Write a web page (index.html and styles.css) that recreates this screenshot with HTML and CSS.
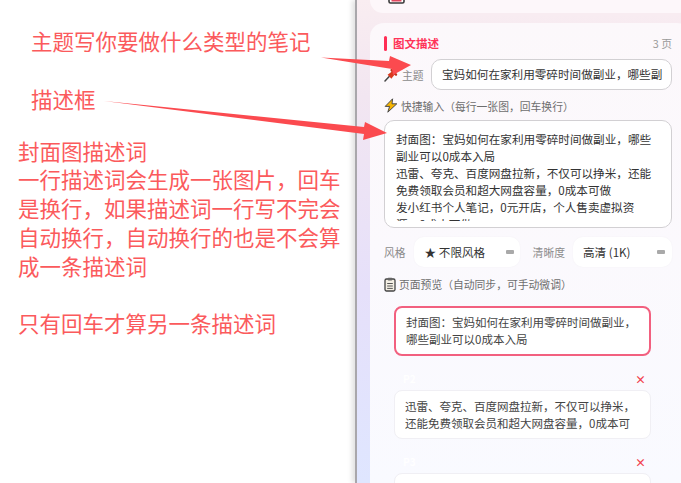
FILE: index.html
```html
<!DOCTYPE html>
<html lang="zh-CN">
<head>
<meta charset="utf-8">
<title>图文描述</title>
<link rel="stylesheet" href="styles.css">
</head>
<body>
<div class="page">
  <section class="notes">
    <p class="note note-topic">主题写你要做什么类型的笔记</p>
    <p class="note note-box">描述框</p>
    <div class="note-body">
      <p>封面图描述词</p>
      <p>一行描述词会生成一张图片，回车</p>
      <p>是换行，如果描述词一行写不完会</p>
      <p>自动换行，自动换行的也是不会算</p>
      <p>成一条描述词</p>
      <p>&nbsp;</p>
      <p>只有回车才算另一条描述词</p>
    </div>
  </section>
  <main class="panel">
    <div class="card card-top">
      <svg class="top-icon" width="17" height="14" viewBox="0 0 17 14"><rect x="1" y="1" width="15" height="12" rx="1.5" fill="#fff" stroke="#3a3a3a" stroke-width="1.6"/><rect x="3.5" y="7" width="10" height="4.5" fill="#e2475f"/></svg>
    </div>
    <div class="card card-main">
      <header class="card-head">
        <span class="bar"></span>
        <h2 class="title">图文描述</h2>
        <span class="count">3 页</span>
      </header>
      <div class="topic-row">
        <svg class="icon" width="14" height="14" viewBox="0 0 14 14"><path d="M1 13 5.2 8.6" stroke="#444" stroke-width="1.5" stroke-linecap="round"/><path d="M3.6 6.8 8 3.4l2.8 2.8-3.4 4.6z" fill="#d9381e"/><path d="M7.6 2.2l4.4 4.4" stroke="#c5301c" stroke-width="2.4" stroke-linecap="round"/></svg>
        <span class="label">主题</span>
        <div class="field topic-field"><span class="topic-text">宝妈如何在家利用零碎时间做副业，哪些副业可以0成本入局</span></div>
      </div>
      <div class="sub-head sub-quick">
        <svg class="icon" width="14" height="15" viewBox="0 0 14 15"><path d="M8.6.8 1.2 8.4h4.4L3.8 14.2 12.8 5.8H8z" fill="#f7b500" stroke="#4a4a4a" stroke-width="1"/></svg>
        <span>快捷输入（每行一张图，回车换行）</span>
      </div>
      <div class="field textarea">
        <div class="textarea-inner">
          <p>封面图：宝妈如何在家利用零碎时间做副业，哪些副业可以0成本入局</p>
          <p>迅雷、夸克、百度网盘拉新，不仅可以挣米，还能免费领取会员和超大网盘容量，0成本可做</p>
          <p>发小红书个人笔记，0元开店，个人售卖虚拟资源，0成本可做</p>
        </div>
      </div>
      <div class="options">
        <span class="label">风格</span>
        <div class="select select-style"><span>★ 不限风格</span><i class="caret"></i></div>
        <span class="label">清晰度</span>
        <div class="select select-quality"><span>高清 (1K)</span><i class="caret"></i></div>
      </div>
      <div class="sub-head sub-preview">
        <svg class="icon" width="12" height="15" viewBox="0 0 12 15"><rect x="1" y="2" width="10" height="12" rx="1.5" fill="#f4efe4" stroke="#444" stroke-width="1.3"/><rect x="3.6" y=".8" width="4.8" height="2.6" rx=".8" fill="#666"/><path d="M3.2 6.5h5.6M3.2 9h5.6M3.2 11.4h5.6" stroke="#555"/></svg>
        <span>页面预览（自动同步，可手动微调）</span>
      </div>
      <div class="pages">
        <div class="page-card active"><div class="page-text">封面图：宝妈如何在家利用零碎时间做副业，哪些副业可以0成本入局</div></div>
        <div class="page-meta"><span class="tag">P2</span><span class="del">×</span></div>
        <div class="page-card"><div class="page-text">迅雷、夸克、百度网盘拉新，不仅可以挣米，还能免费领取会员和超大网盘容量，0成本可做</div></div>
        <div class="page-meta"><span class="tag">P3</span><span class="del">×</span></div>
        <div class="page-card"><div class="page-text">发小红书个人笔记，0元开店，个人售卖虚拟资源，0成本可做</div></div>
      </div>
    </div>
  </main>
  <svg class="arrows" width="681" height="483" viewBox="0 0 681 483">
    <polygon fill="#fb4a4f" points="321,57.5 389,61 390,56 411,65 393,75 392,69"/>
    <polygon fill="#fb4a4f" points="104,101 364,127 365,122 387,133 363,140 364,134"/>
  </svg>
</div>
</body>
</html>
```
FILE: styles.css
```css
* { box-sizing: border-box; }
html, body { margin: 0; height: 100%; }
body { background: #fff; overflow: hidden; font-family: "Liberation Sans", "Noto Sans CJK SC", sans-serif; }
p, h2 { margin: 0; }
.page { position: relative; display: flex; width: 681px; height: 483px; overflow: hidden; }
.notes { width: 355px; flex: none; color: #fb5a5c; font-family: "Noto Sans CJK SC", sans-serif; font-size: 21.5px; line-height: 28.8px; }
.note-topic { margin: 27px 0 0 31px; }
.note-box { margin: 29px 0 0 31px; }
.note-body { margin: 23px 0 0 18px; white-space: nowrap; }
.panel { flex: 1; min-width: 0; height: 483px; padding: 0 0 0 13px; border-left: 2px solid #a9a7ab; box-shadow: -3px 0 5px rgba(0,0,0,.12); display: flex; flex-direction: column; gap: 10px; overflow: hidden; font-family: "Noto Sans CJK SC", sans-serif; background: linear-gradient(180deg, #f9edf1 0%, #f2e6f1 20%, #e6e0fa 60%, #dfe6ff 100%); }
.card { flex: none; }
.card-top { height: 13px; margin-right: -10px; border-radius: 0 0 14px 14px; position: relative; overflow: hidden; background: #fdf7fa; }
.top-icon { position: absolute; top: -10px; left: 18px; }
.card-main { flex: 1; margin-right: -10px; padding: 12px 19px 0 14px; border-radius: 14px 14px 0 0; background: linear-gradient(180deg, #fcf8fb 0%, #fbf9fd 50%, #f9faff 100%); overflow: hidden; }
.card-head { display: flex; align-items: center; height: 16px; }
.bar { width: 3px; height: 15px; border-radius: 2px; background: #ff2e55; margin-right: 6px; }
.title { font-size: 11.5px; font-weight: 700; color: #ff3358; line-height: 16px; }
.count { margin-left: auto; font-size: 10.8px; color: #9a9a9a; }
.topic-row { display: flex; align-items: center; margin-top: 8px; height: 31px; }
.icon { flex: none; }
.label { flex: none; font-size: 10.8px; color: #8b8b8b; line-height: 16px; }
.topic-row .label { margin-left: 4px; width: 29px; }
.field { background: #fff; border: 1px solid #d2d0d3; border-radius: 10px; color: #333; font-size: 11.6px; }
.topic-field { flex: 1; min-width: 0; height: 31px; padding: 0 9px 0 10px; line-height: 29px; }
.topic-text { display: block; white-space: nowrap; overflow: hidden; }
.sub-head { display: flex; align-items: center; gap: 3px; font-size: 10.8px; color: #6e6e6e; line-height: 16px; }
.sub-quick { margin-top: 8px; height: 15px; }
.textarea { height: 108px; margin-top: 7px; padding: 10px 14px 6px 11px; line-height: 17px; }
.textarea-inner { height: 90px; overflow: hidden; }
.options { display: flex; align-items: center; margin-top: 9px; height: 30px; }
.select { display: flex; align-items: center; justify-content: space-between; height: 30px; padding: 0 6px 0 11px; background: #fff; border-radius: 10px; font-size: 11.6px; color: #333; box-shadow: 0 0 2px rgba(0,0,0,.04); }
.select-style { width: 106px; margin: 0 13px 0 8px; }
.select-quality { flex: 1; margin-left: 8px; padding: 0 7px 0 10px; }
.caret { width: 8px; height: 4px; border-radius: 1px; background: #a9a9a9; }
.sub-preview { margin-top: 9px; height: 16px; }
.pages { padding: 14px 21px 0 10px; }
.page-card { height: 49px; padding: 7px 10px; background: #fff; border: 1px solid #f0eff4; border-radius: 8px; font-size: 11.5px; line-height: 17px; color: #444; }
.page-card.active { height: 50px; border: 2px solid #f2607f; padding: 6px 10px; }
.page-text { height: 34px; overflow: hidden; }
.page-meta { display: flex; align-items: center; justify-content: space-between; height: 34px; padding: 11px 5px 0 9px; }
.tag { font-size: 10px; color: #fff; font-weight: 700; }
.del { font-size: 11px; line-height: 14px; font-weight: 700; color: #f2404c; }
.arrows { position: absolute; left: 0; top: 0; pointer-events: none; }
```
